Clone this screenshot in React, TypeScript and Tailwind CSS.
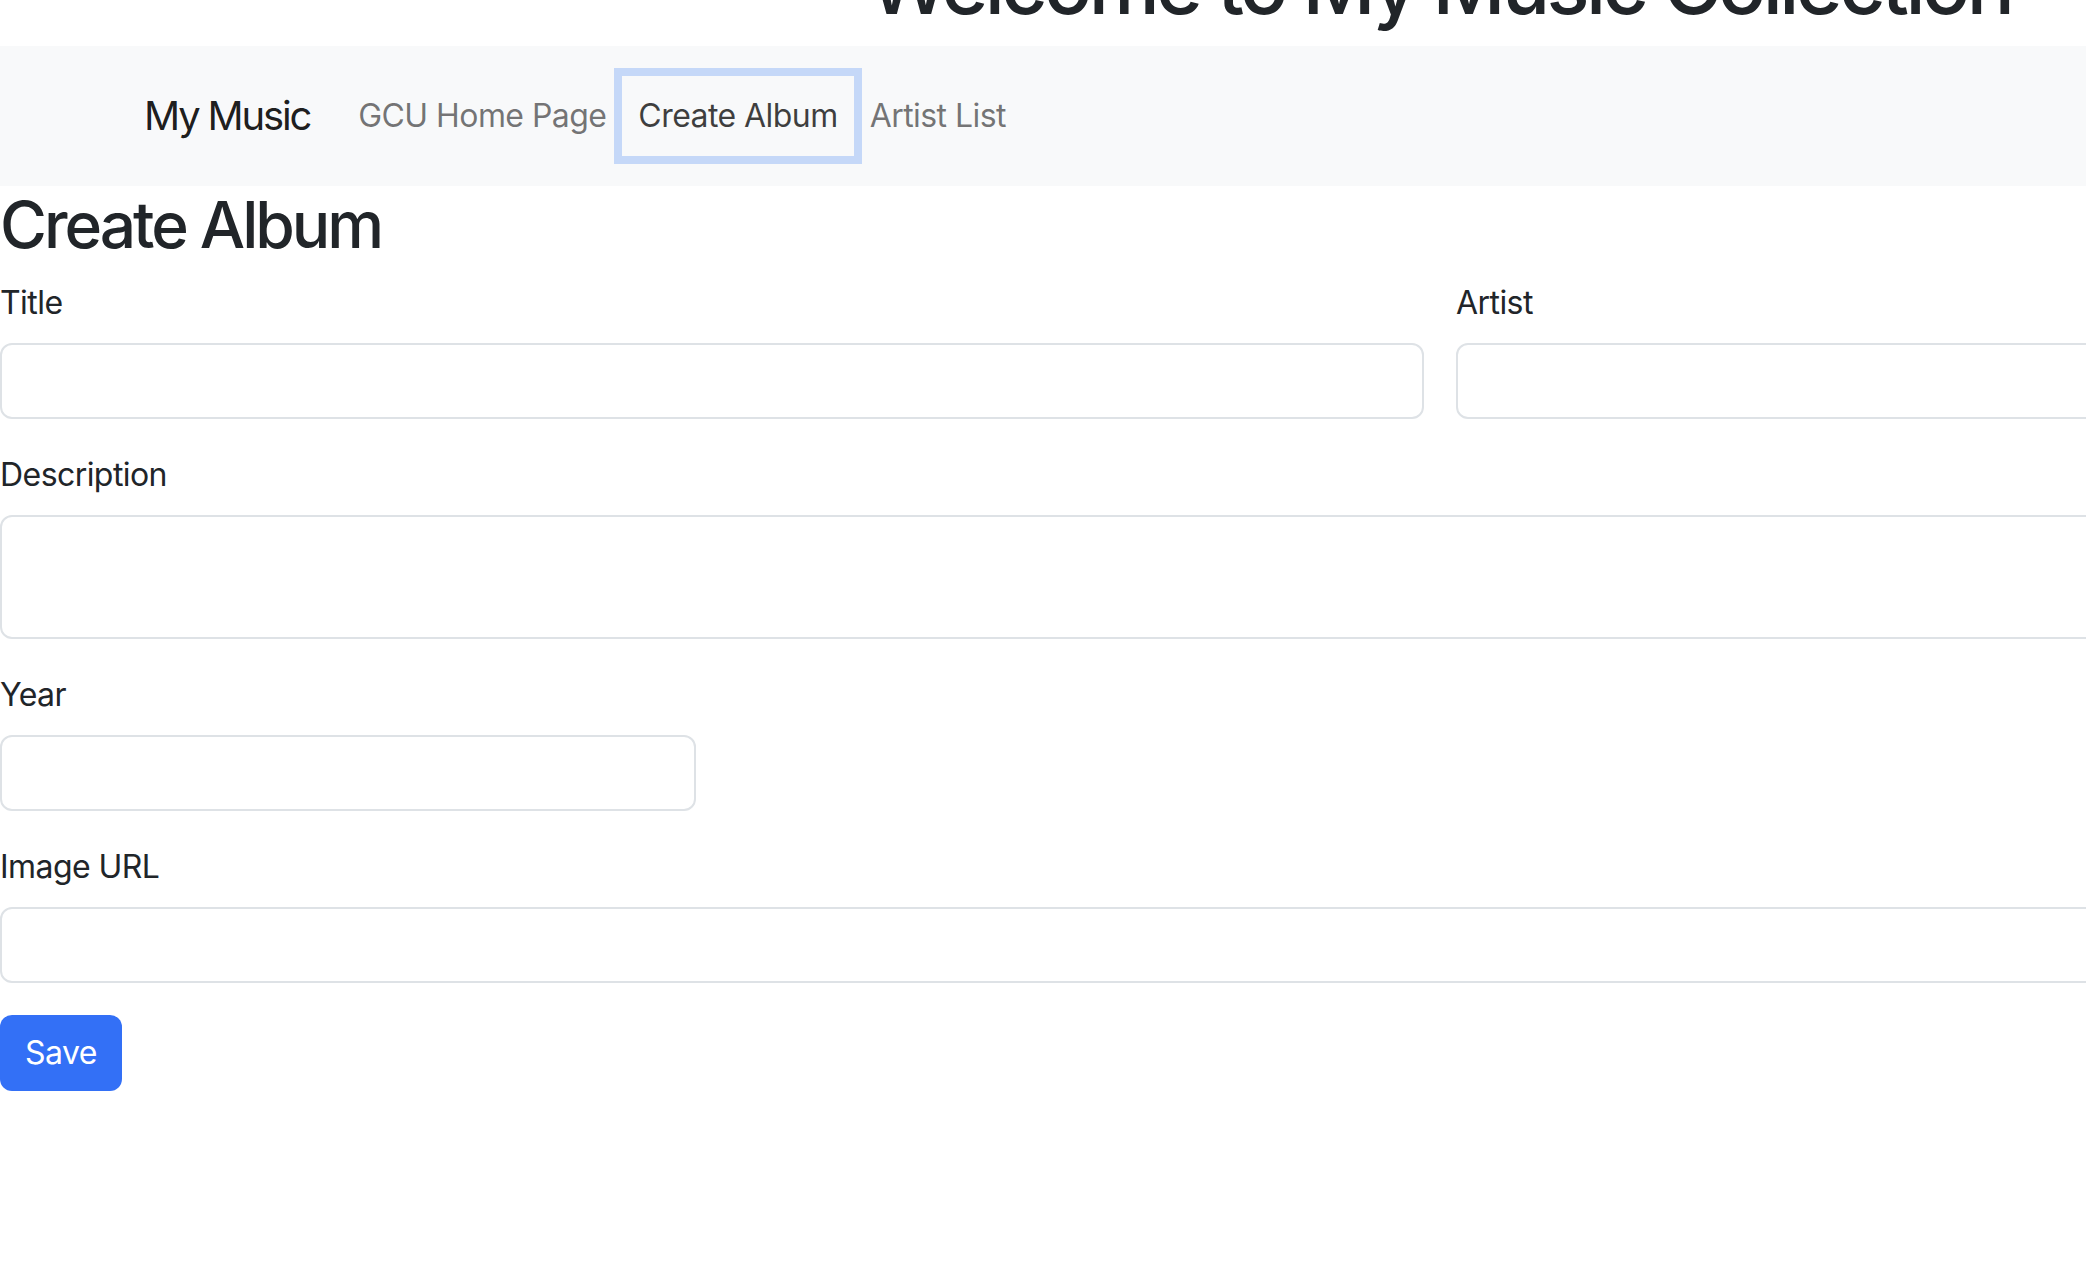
import React from "react";

const font = { fontFamily: "Inter, 'Liberation Sans', sans-serif" };

function Field({
  label,
  width,
  tall = false,
}: {
  label: string;
  width: string;
  tall?: boolean;
}) {
  return (
    <div className={`flex flex-col ${width}`}>
      <label className="mb-[16px] text-[32px] leading-[48px] text-[#212529]">
        {label}
      </label>
      {tall ? (
        <textarea className="h-[124px] w-full resize-none rounded-[12px] border-2 border-[#dee2e6] bg-white outline-none" />
      ) : (
        <input className="h-[76px] w-full rounded-[12px] border-2 border-[#dee2e6] bg-white outline-none" />
      )}
    </div>
  );
}

export default function App() {
  return (
    <div
      className="h-screen w-screen overflow-hidden bg-white tracking-[-0.035em]"
      style={font}
    >
      <div className="w-[2880px]">
        <h1 className="mt-[-63px] mb-[13px] text-center text-[80px] font-medium leading-[96px] tracking-[-0.045em] text-[#212529]">
          Welcome to My Music Collection
        </h1>

        {/* Navbar */}
        <nav className="flex h-[140px] items-center bg-[#f8f9fa] pl-[144px]">
          <a className="mr-[32px] text-[40px] leading-[60px] tracking-[-0.054em] text-black/90">
            My Music
          </a>
          <a className="px-[16px] py-[16px] text-[32px] leading-[48px] text-black/55">
            GCU Home Page
          </a>
          <a className="px-[16px] py-[16px] text-[32px] leading-[48px] text-black/75 shadow-[0_0_0_8px_#c5d8f8]">
            Create Album
          </a>
          <a className="px-[16px] py-[16px] text-[32px] leading-[48px] text-black/55">
            Artist List
          </a>
        </nav>

        <h2 className="mb-[16px] text-[64px] font-medium leading-[77px] tracking-[-0.047em] text-[#212529]">
          Create Album
        </h2>

        <form className="flex flex-col gap-[32px]">
          <div className="flex gap-[32px]">
            <Field label="Title" width="w-[1424px]" />
            <Field label="Artist" width="w-[1424px]" />
          </div>
          <Field label="Description" width="w-full" tall />
          <Field label="Year" width="w-[696px]" />
          <Field label="Image URL" width="w-full" />
          <div>
            <button
              type="button"
              className="h-[76px] rounded-[12px] bg-[#3370f6] px-[25px] text-[32px] leading-[48px] text-white"
            >
              Save
            </button>
          </div>
        </form>
      </div>
    </div>
  );
}
